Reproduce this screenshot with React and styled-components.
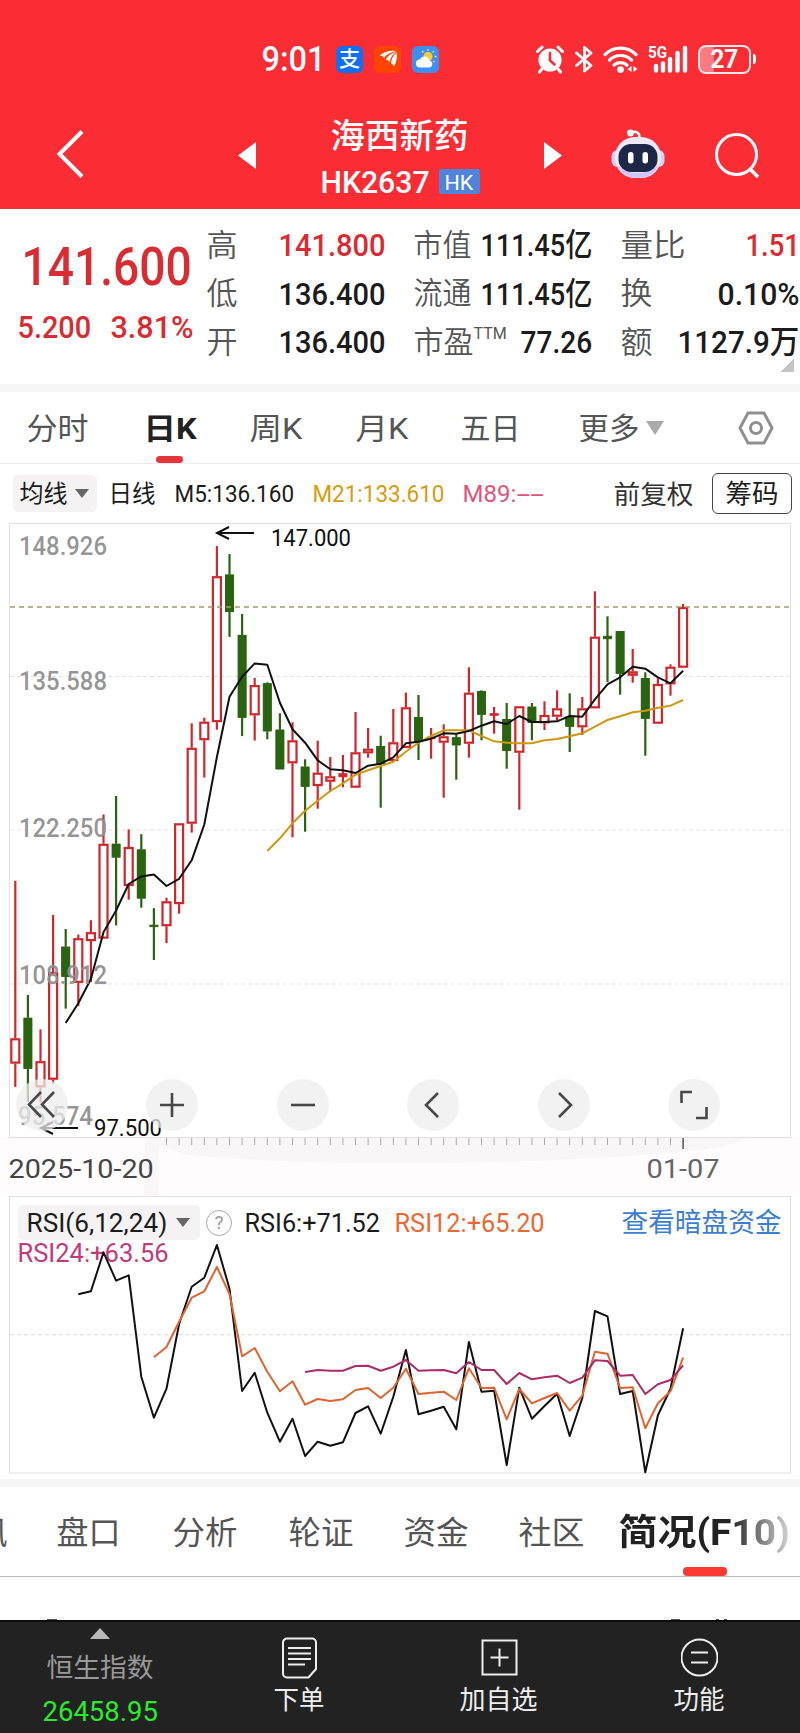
import React, { useLayoutEffect, useRef, useState } from "react";
import styled, { createGlobalStyle } from "styled-components";

const GlobalStyle = createGlobalStyle`
    * { box-sizing: border-box; }
    body {
        margin: 0;
        background: #fff;
        font-family: Roboto, "Noto Sans CJK SC", sans-serif;
        color: #1c1c1c;
    }
    svg { display: block; flex: none; }
`;

const Page = styled.div`
    width: 800px;
    height: 1733px;
    overflow: hidden;
    display: flex;
    flex-direction: column;
`;

/* ---------- text squeezed to a fixed width ---------- */

const FitBox = styled.span`
    display: block;
    flex: none;
    width: ${(p) => p.$w}px;
    margin-left: ${(p) => p.$ml || 0}px;
    font-size: ${(p) => p.$size}px;
    font-weight: ${(p) => p.$weight || 400};
    color: ${(p) => p.$color || "inherit"};
    line-height: 1.2;
    white-space: nowrap;
`;

const FitInner = styled.span`
    display: inline-block;
    transform-origin: left center;
`;

function Fit({ w, ml, size, weight, color, children }) {
    const ref = useRef(null);
    const [scale, setScale] = useState(1);

    useLayoutEffect(() => {
        setScale(w / ref.current.offsetWidth);
    }, [w, children]);

    return (
        <FitBox $w={w} $ml={ml} $size={size} $weight={weight} $color={color}>
            <FitInner ref={ref} style={{ transform: `translate(-0.5px, 1px) scaleX(${scale})` }}>{children}</FitInner>
        </FitBox>
    );
}

/* ---------- header ---------- */

const Header = styled.header`
    height: 209px;
    flex: none;
    background: #fa2c34;
    border-bottom: 1px solid #d9363e;
    color: #fff;
`;

const StatusBar = styled.div`
    height: 104px;
    padding: 14px 0 0 262px;
    display: flex;
    align-items: center;
`;

const AppIcon = styled.div`
    width: 27px;
    height: 27px;
    margin-left: ${(p) => p.$ml}px;
    border-radius: 6px;
    background: ${(p) => p.$bg};
    display: flex;
    align-items: center;
    justify-content: center;
    font-size: 21px;
    line-height: 1;
    font-weight: 500;
`;

const StatusIcons = styled.div`
    display: flex;
    align-items: center;
    margin-left: 97px;
`;

const Battery = styled.div`
    width: 53px;
    height: 29px;
    margin-left: 10px;
    border: 2px solid #ffe6e7;
    border-radius: 8px;
    display: flex;
    align-items: center;
    justify-content: center;
    background: linear-gradient(90deg, #fc7a80 0 28%, transparent 28%);
`;

const BatteryTip = styled.div`
    width: 3px;
    height: 10px;
    margin-left: 2px;
    border-radius: 0 3px 3px 0;
    background: #fff;
`;

const TitleBar = styled.div`
    height: 104px;
    display: flex;
    align-items: flex-start;
`;

const TitleIcon = styled.div`
    margin: ${(p) => p.$mt}px 0 0 ${(p) => p.$ml}px;
`;

const Title = styled.div`
    width: 158px;
    margin: 11px 0 0 66px;
    display: flex;
    flex-direction: column;
`;

const CodeRow = styled.div`
    height: 34px;
    margin-top: 9px;
    display: flex;
    align-items: center;
`;

const MarketTag = styled.span`
    width: 42px;
    height: 25px;
    margin-left: 9px;
    display: flex;
    align-items: center;
    justify-content: center;
    background: #4f84dc;
    border-radius: 2px;
`;

function StatusGlyphs() {
    return (
        <svg width="152" height="30" viewBox="0 0 152 30" fill="none" stroke="#fff" strokeLinecap="round">
            {/* alarm */}
            <circle cx="14" cy="16" r="11.6" fill="#fff" stroke="none" />
            <path d="M14 9v7.500l4.500 4" stroke="#fa2c34" strokeWidth="2.600" />
            <path d="M1.500 7.500 6 3.200M26.500 7.500 22 3.200M5.500 25.500 3.500 28M22.500 25.500l2 2.500" strokeWidth="3" />
            {/* bluetooth */}
            <path d="M40.500 9 55 21.500 48.500 27V3.500L55 9 40.500 21.500" strokeWidth="2.800" strokeLinejoin="round" />
            {/* wifi */}
            <path d="M69 10.500c8.500-8.500 22.500-8.500 31 0M73.500 16c6-6 16-6 22 0M78 21.200c3.500-3.500 9.500-3.500 13 0" strokeWidth="3.200" />
            <circle cx="84.500" cy="25.600" r="3.400" fill="#fff" stroke="none" />
            <path d="M91.500 25l4-3v6zM101.500 25l-4-3v6z" fill="#fff" stroke="none" />
            {/* signal */}
            <text x="112" y="14" fill="#fff" stroke="none" fontSize="16" fontWeight="700" textLength="19" lengthAdjust="spacingAndGlyphs">5G</text>
            <path d="M120 22v4.500M127 19.500v7M134 15v11.500M141.500 9v17.500M149 4v22.500" strokeWidth="4.400" />
        </svg>
    );
}

function Robot() {
    return (
        <svg width="56" height="52" viewBox="0 0 56 52">
            <path d="M21 4.500c5-2 9 0 8.500 6" fill="none" stroke="#fff" strokeWidth="2.500" />
            <circle cx="20.500" cy="5" r="3.400" fill="#fff" />
            <rect x="1.500" y="22" width="12" height="17" rx="6" fill="#d4cffc" />
            <rect x="42.500" y="22" width="12" height="17" rx="6" fill="#d4cffc" />
            <rect x="5" y="9" width="46" height="41" rx="20" fill="#eeeafe" />
            <path d="M7 36c4 10 12 14 21 14s17-4 21-14c-6 7-12 9-21 9s-15-2-21-9z" fill="#cfc4fb" />
            <rect x="8.500" y="16" width="39" height="28" rx="12.500" fill="#1d2748" />
            <rect x="18" y="24" width="5.500" height="11.500" rx="2.700" fill="#fff" />
            <rect x="32.500" y="24" width="5.500" height="11.500" rx="2.700" fill="#fff" />
        </svg>
    );
}

/* ---------- quote ---------- */

const Quote = styled.section`
    height: 175px;
    flex: none;
    padding: 11px 0 0 18px;
    display: flex;
    align-items: flex-start;
    position: relative;
`;

const Price = styled.div`
    width: 189px;
    padding-top: 14px;
    color: #d92b31;
`;

const Change = styled.div`
    display: flex;
    margin-top: 8px;
`;

const Stats = styled.div`
    display: grid;
    grid-template-columns: repeat(3, 178.500px);
    grid-auto-rows: 48.500px;
    column-gap: 28.500px;
`;

const Stat = styled.div`
    display: flex;
    align-items: center;
    justify-content: space-between;
`;

const StatLabel = styled.div`
    display: flex;
    color: #555;
`;

const Corner = styled.div`
    position: absolute;
    left: 781px;
    top: 150px;
    width: 13px;
    height: 13px;
    background: linear-gradient(135deg, transparent 50%, #c4c4c4 50%);
`;

const stats = [
    { label: "高", lw: 31, value: "141.800", w: 107, up: true },
    { label: "市值", lw: 58, value: "111.45亿", w: 112 },
    { label: "量比", lw: 65, value: "1.51", w: 54, up: true },
    { label: "低", lw: 31, value: "136.400", w: 107 },
    { label: "流通", lw: 58, value: "111.45亿", w: 112 },
    { label: "换", lw: 32, value: "0.10%", w: 82 },
    { label: "开", lw: 31, value: "136.400", w: 107 },
    { label: "市盈", lw: 60, value: "77.26", w: 72, note: "TTM" },
    { label: "额", lw: 32, value: "1127.9万", w: 122 },
];

const Gap = styled.div`
    height: 8px;
    flex: none;
    background: #f6f6f6;
    margin-top: ${(p) => p.$mt || 0}px;
`;

/* ---------- period tabs ---------- */

const Tabs = styled.nav`
    height: ${(p) => p.$h}px;
    flex: none;
    display: flex;
    border-bottom: 1px solid ${(p) => p.$line};
    overflow: hidden;
`;

const Tab = styled.div`
    position: relative;
    height: 100%;
    display: flex;
    align-items: center;
    margin-left: ${(p) => p.$ml}px;
    color: ${(p) => (p.$on ? "#222" : "#555")};
`;

const TabMark = styled.div`
    position: absolute;
    bottom: 0;
    left: ${(p) => p.$left}px;
    width: ${(p) => p.$w}px;
    height: ${(p) => p.$h}px;
    border-radius: 4px;
    background: ${(p) => p.$c};
`;

const Caret = styled.i`
    flex: none;
    margin-left: ${(p) => p.$ml || 0}px;
    border: ${(p) => p.$s}px solid transparent;
    border-bottom: 0;
    border-top: ${(p) => p.$h}px solid ${(p) => p.$c};
`;

const periods = [
    { text: "分时", w: 62, ml: 27 },
    { text: "日K", w: 53, ml: 55, on: true },
    { text: "周K", w: 53, ml: 53 },
    { text: "月K", w: 53, ml: 53 },
    { text: "五日", w: 60, ml: 52 },
    { text: "更多", w: 61, ml: 58 },
];

/* ---------- moving average row ---------- */

const MaRow = styled.div`
    height: 59px;
    flex: none;
    padding-left: 13px;
    display: flex;
    align-items: center;
`;

const MaTexts = styled.div`
    display: flex;
    padding-top: 2px;
`;

const Chip = styled.div`
    width: ${(p) => p.$w}px;
    height: ${(p) => p.$h}px;
    flex: none;
    padding-left: ${(p) => p.$pl}px;
    display: flex;
    align-items: center;
    background: #f5f2f3;
    border-radius: 5px;
`;

const ChipsButton = styled.div`
    width: 80px;
    height: 41px;
    margin-left: 18px;
    display: flex;
    align-items: center;
    justify-content: center;
    border: 1.500px solid #444;
    border-radius: 6px;
`;

/* ---------- charts ---------- */

const STEP = 12.6;
const X0 = 15.3;
const cx = (i) => X0 + i * STEP;

// [high, bodyTop, bodyBottom, low, up]
const candles = [
    [357.8, 515.3, 540.6, 563.9, 1], [471.9, 494.8, 545.8, 578.8, 0], [506.4, 538.2, 564.3, 579.6, 1],
    [391.9, 449, 556.7, 560.7, 1], [406, 423.7, 453.8, 485.6, 0], [411.6, 415.2, 459.8, 483.1, 1],
    [397.2, 409.2, 418.1, 459, 1], [291.5, 320.8, 415.6, 415.6, 1], [273, 320.8, 334.5, 402.4, 0],
    [306.4, 324, 363, 376.7, 1], [311.2, 326.5, 375.5, 384.7, 0], [385.1, 402.2, 403.6, 437, 0],
    [374.7, 378.3, 403.2, 420.1, 1], [300.3, 300.3, 381.1, 390.7, 1], [200.3, 224.8, 300.7, 309.6, 1],
    [194.7, 198.7, 217.2, 254.5, 1], [23.1, 53.2, 199.1, 206.7, 1], [31.1, 51.6, 89, 113.9, 0],
    [91, 111.9, 194.7, 213.1, 0], [154.9, 162.1, 192.3, 217.6, 1], [159.3, 160.3, 208.3, 216.3, 0],
    [190.3, 206.7, 246.3, 246.3, 0], [199.3, 217.3, 240.3, 314.3, 1], [236.3, 243.7, 263.7, 308.7, 0],
    [217.7, 249.7, 263, 285.7, 1], [234, 253.3, 258.7, 268.7, 1], [232, 250.7, 253.7, 264.3, 1],
    [189, 229.3, 264.7, 264.7, 1], [205, 225.7, 230.3, 234.7, 1], [212.7, 223, 241, 284.7, 0],
    [186, 219.3, 238, 238, 1], [169.7, 184.3, 225, 225, 1], [172, 194, 218.7, 237, 0],
    [205, 214.3, 215.7, 235.7, 1], [201.3, 213.3, 219.7, 274.7, 1], [211.3, 214.3, 222.3, 256.7, 0],
    [144.3, 169.7, 220.7, 234.7, 1], [167.3, 168, 191.7, 217.3, 0], [184, 190.7, 192.3, 210.7, 1],
    [180, 196, 228, 245.7, 0], [183, 183.3, 229.7, 286.7, 1], [180, 183.7, 199.7, 217.3, 0],
    [178.3, 192, 200.3, 207, 1], [167.3, 185.3, 193.7, 197, 1], [170.3, 193.7, 203.7, 229, 0],
    [174, 185.3, 204.3, 212, 1], [68.3, 113.7, 185.3, 185.3, 1], [93.3, 113.3, 115.7, 159.3, 0],
    [108, 108, 150.7, 171.7, 0], [126, 148.3, 152.7, 159.7, 1], [149.3, 155, 195.7, 232.7, 0],
    [155.3, 161, 200.7, 200.7, 1], [141.3, 143.7, 161.3, 172.7, 1], [81, 84, 144.7, 144.7, 1],
];

const ma5 = [
    500, 480.3, 456, 409.2, 387.5, 361, 353.4, 351.4, 363, 355.8, 337.3, 301.5, 234, 173.8, 153.7, 140.4, 141.7,
    179.7, 206.3, 219.7, 237.3, 246.3, 247.3, 250, 242.7, 240.7, 234.3, 220.3, 218.7, 215.7, 210.3, 210.7, 208,
    202.7, 198.3, 201, 193, 199, 199, 198.3, 193, 193.7, 176.3, 161.3, 154.3, 143.7, 145.7, 154.3, 160.3, 147.7,
];

const ma21 = [
    328, 315.3, 300.3, 287.7, 277.7, 268, 260.3, 251.7, 247.3, 243, 238.7, 228.7, 219.7, 213, 207.3, 207.3, 207.3,
    213, 218.3, 219.7, 220.3, 220.3, 217.3, 216, 213.3, 210.3, 203.7, 197, 193.3, 189.3, 187.7, 184.7, 182.7, 177,
];

const rsi6 = [
    98.3, 95.3, 56.3, 84.7, 79.3, 180.7, 221.7, 192.7, 128, 90.7, 81.7, 49, 92.7, 195, 176.7, 216.7, 245.7, 222.7,
    260, 245.7, 249.7, 246.3, 217, 210.3, 237.7, 200.7, 154, 218.3, 214.7, 210.7, 233.3, 146, 195.7, 194.7, 269,
    191.7, 222.7, 210, 197.7, 240, 202, 115, 120.3, 198, 195, 276.3, 219.3, 192.7, 132.3,
];

const rsi12 = [
    161.3, 151, 125.7, 101.7, 95.3, 71, 98, 160.3, 152, 175.7, 195.3, 185.3, 208.7, 203, 205, 203.3, 194, 192, 202,
    191.7, 172.7, 198, 196.7, 195.7, 204, 172.3, 192, 191.7, 223.3, 193, 207.3, 202, 197, 214.7, 199.7, 155.7,
    157.7, 192, 191.3, 232.3, 207.3, 195.3, 161.7,
];

const rsi24 = [
    176, 174, 174.7, 174.7, 170, 169.7, 174.7, 170.7, 164, 174.7, 174.3, 174, 177.3, 166, 174, 174, 188, 177, 183.3,
    181.3, 179.7, 187, 181.7, 164.3, 165, 179.7, 179, 198, 188.3, 184, 169.3,
];

function Line({ data, from, color }) {
    return (
        <polyline
            points={data.map((y, i) => `${cx(from + i).toFixed(1)},${y}`).join(" ")}
            fill="none"
            stroke={color}
            strokeWidth="2"
            strokeLinejoin="round"
        />
    );
}

function Candle({ i, data }) {
    const [high, top, bottom, low, up] = data;
    const x = cx(i);
    const color = up ? "#d0272d" : "#2b6410";
    const flat = bottom - top < 3.5;
    return (
        <g stroke={color} strokeWidth="2.2">
            <line x1={x} x2={x} y1={high} y2={flat ? low : top} />
            {!flat && <line x1={x} x2={x} y1={bottom} y2={low} />}
            {up && !flat ? (
                <rect x={x - 4} y={top + 1} width="8" height={bottom - top - 2} fill="none" />
            ) : (
                <rect x={x - 4} y={top} width="8" height={Math.max(bottom - top, 1)} fill={color} strokeWidth={flat ? 1 : 0} />
            )}
            {!up && !flat && <rect x={x - 4} y={top + 0.5} width="8" height={bottom - top - 1} fill={color} strokeWidth="1" />}
        </g>
    );
}

const axis = [
    ["148.926", 31.5, 19, 88],
    ["135.588", 166.5, 19, 88],
    ["122.250", 313.500, 19, 88],
    ["108.912", 461, 19, 88],
    ["95.574", 602, 18, 75],
];

const KChart = styled.section`
    position: relative;
    height: 673px;
    flex: none;
    background: linear-gradient(#fff 614px, #fefcfd 614px);
`;

const Tools = styled.div`
    position: absolute;
    left: 16px;
    top: 556px;
    display: flex;
    gap: 78.400px;
`;

const ToolButton = styled.div`
    width: 52px;
    height: 52px;
    border-radius: 50%;
    display: flex;
    align-items: center;
    justify-content: center;
    background: rgba(237, 237, 237, 0.74);
`;

const Dates = styled.div`
    position: absolute;
    left: 9px;
    top: 631px;
    display: flex;
    color: #555;
`;

const toolIcons = [
    "M14 2 2 14.500l12 12.500M27 2 15 14.500l12 12.500",
    "M15 3v24M3 15h24",
    "M3 15h24",
    "M20 3 8 15l12 12",
    "M10 3l12 12-12 12",
    "M13 2H2.500v11M17 28h10.500V17",
];

function PriceChart() {
    return (
        <KChart>
            <svg width="800" height="673" viewBox="0 0 800 673">
                <path d="M145 615h600c-10 9-50 14-150 20-120 7-330 7-410-4l-26-8v50h-15z" fill="#f9f6f7" />
                <rect x="9.500" y="0.500" width="781" height="614" fill="none" stroke="#e3e0e1" />
                {[153.5, 307, 461].map((y) => (
                    <line key={y} x1="10" x2="790" y1={y} y2={y} stroke="#e3e3e3" strokeDasharray="4 3" />
                ))}
                {candles.map((c, i) => <Candle key={i} i={i} data={c} />)}
                <line x1="10" x2="790" y1="84" y2="84" stroke="#a39a70" strokeWidth="1.500" strokeDasharray="5 4" />
                <Line data={ma21} from={20} color="#cf980f" />
                <Line data={ma5} from={4} color="#111" />
                {axis.map(([t, y, x, w]) => (
                    <text key={t} x={x} y={y} fontSize="25" fontWeight="500" fill="#909090" fillOpacity="0.95" textLength={w} lengthAdjust="spacingAndGlyphs">{t}</text>
                ))}
                <g stroke="#111" strokeWidth="2" fill="none">
                    <path d="M254 10h-36M229 4l-12 6 12 6" />
                    <path d="M78 605H42M53 599l-12 6 12 6" />
                </g>
                <text x="271" y="22.500" fontSize="23.500" fill="#111" textLength="80" lengthAdjust="spacingAndGlyphs">147.000</text>
                <text x="94" y="612.500" fontSize="23.500" fill="#111" textLength="68" lengthAdjust="spacingAndGlyphs">97.500</text>
                {Array.from({ length: 41 }, (_, i) => (
                    <line key={i} x1={cx(12 + i)} x2={cx(12 + i)} y1="615" y2="622" stroke="#aaa" />
                ))}
                <line x1={cx(53)} x2={cx(53)} y1="615" y2="626" stroke="#555" strokeWidth="1.500" />
            </svg>
            <Tools>
                {toolIcons.map((d) => (
                    <ToolButton key={d}>
                        <svg width="30" height="30" viewBox="0 0 30 30" fill="none" stroke="#484848" strokeWidth="2.600">
                            <path d={d} />
                        </svg>
                    </ToolButton>
                ))}
            </Tools>
            <Dates>
                <Fit w={145} size={25} color="#444">2025-10-20</Fit>
                <Fit w={73} ml={493} size={25} color="#666">01-07</Fit>
            </Dates>
        </KChart>
    );
}

const RsiPanel = styled.section`
    position: relative;
    height: 278px;
    flex: none;
`;

const RsiHead = styled.div`
    position: absolute;
    left: 18px;
    top: 9px;
    display: flex;
    align-items: center;
    height: 35px;
`;

const RsiSecond = styled.div`
    position: absolute;
    left: 18px;
    top: 41px;
`;

const Help = styled.div`
    width: 26px;
    height: 26px;
    margin-left: 6px;
    border: 1.500px solid #aaa;
    border-radius: 50%;
    display: flex;
    align-items: center;
    justify-content: center;
    font-size: 19px;
    color: #999;
`;

const RsiSvg = styled.svg`
    position: relative;
`;

function RsiChart() {
    return (
        <RsiPanel>
            <RsiHead>
                <Chip $w={182} $h={35} $pl={9}>
                    <Fit w={141} size={26}>RSI(6,12,24)</Fit>
                    <Caret $ml={8} $s={7} $h={9} $c="#666" />
                </Chip>
                <Help>?</Help>
                <Fit w={136} ml={13} size={26}>RSI6:+71.52</Fit>
                <Fit w={150} ml={14} size={26} color="#ec6830">RSI12:+65.20</Fit>
                <Fit w={160} ml={77} size={27} color="#3d7ed2">查看暗盘资金</Fit>
            </RsiHead>
            <RsiSecond>
                <Fit w={151} size={26} color="#c5387a">RSI24:+63.56</Fit>
            </RsiSecond>
            <RsiSvg width="800" height="278" viewBox="0 0 800 278">
                <rect x="9.500" y="0.500" width="781" height="276.500" fill="none" stroke="#e3e0e1" />
                <line x1="10" x2="790" y1="138.700" y2="138.700" stroke="#dcdcdc" strokeDasharray="4 3" />
                <Line data={rsi6} from={5} color="#111" />
                <Line data={rsi12} from={11} color="#df6430" />
                <Line data={rsi24} from={23} color="#ab2c68" />
            </RsiSvg>
        </RsiPanel>
    );
}

/* ---------- lower tabs ---------- */

const sections = [
    { text: "资讯", w: 64, ml: -56 },
    { text: "盘口", w: 64, ml: 49 },
    { text: "分析", w: 65, ml: 52 },
    { text: "轮证", w: 65, ml: 51 },
    { text: "资金", w: 65, ml: 50 },
    { text: "社区", w: 66, ml: 50 },
    { text: "简况(F10)", w: 171, ml: 34, on: true },
];

const Fade = styled.div`
    padding-top: 2px;
    -webkit-mask-image: ${(p) => (p.$on ? "linear-gradient(90deg, #000 65%, transparent 108%)" : "none")};
`;

const Peek = styled.div`
    height: 43px;
    flex: none;
    display: flex;
    align-items: flex-end;
    padding-left: 47px;
`;

const PeekMark = styled.span`
    width: ${(p) => p.$w}px;
    height: 1px;
    margin-left: ${(p) => p.$ml || 0}px;
    background: #555;
`;

/* ---------- bottom bar ---------- */

const BottomBar = styled.footer`
    height: 114px;
    flex: none;
    display: flex;
    background: #222;
    border-top: 2px solid #0d0d0d;
    color: #eee;
`;

const IndexCell = styled.div`
    width: 200px;
    padding-top: 6px;
    display: flex;
    flex-direction: column;
    align-items: center;
    gap: 12.500px;
`;

const UpArrow = styled.i`
    border: 10px solid transparent;
    border-top: 0;
    border-bottom: 11px solid #b8b8b8;
`;

const Action = styled.div`
    width: 200px;
    padding: 15px 2px 0 0;
    display: flex;
    flex-direction: column;
    align-items: center;
    gap: 5px;
`;

const actions = [
    { text: "下单", w: 51, d: "M6 1.500h25a4 4 0 0 1 4 4V32l-7.500 8.500H6a4 4 0 0 1-4-4v-31a4 4 0 0 1 4-4zM7 11h23M7 16.500h23M7 22h23M7 27.500h17" },
    { text: "加自选", w: 78, d: "M1.500 3.500h34v34h-34zM18.500 11.500v18M9.500 20.500h18" },
    { text: "功能", w: 51, d: "M18.500 2.500a17.500 17.500 0 1 1 0 36a17.500 17.500 0 1 1 0-36M10 15.500h17M10 25.500h17" },
];

export default function App() {
    return (
        <Page>
            <GlobalStyle />
            <Header>
                <StatusBar>
                    <Fit w={64} size={35} weight={500}>9:01</Fit>
                    <AppIcon $bg="#0f70f5" $ml={10}>支</AppIcon>
                    <AppIcon $bg="#ff4300" $ml={11}>
                        <svg width="20" height="20" viewBox="0 0 20 20" fill="#fff">
                            <path d="M1 7C5 3 12 1 18 2c-5 1-9 3-12 7-1-2-3-3-5-2zM7.500 11c2-4 6-7 11-8.500-4 3-6 6-7 10.500-1-1.500-2.500-2.500-4-2zM13 14.500c0-4 2-8 5.500-11 1 5 0 9-2.500 14-.5-1.500-1.500-2.500-3-3z" />
                        </svg>
                    </AppIcon>
                    <AppIcon $bg="#3d8ff0" $ml={11}>
                        <svg width="24" height="24" viewBox="0 0 24 24">
                            <circle cx="14" cy="9.500" r="4.500" fill="#ffce2e" />
                            <path d="M14 2v2M8 4l1.500 1.500M20 4l-1.500 1.500M20.500 9.500h2M19 14l1.500 1" stroke="#ffd75a" strokeWidth="1.300" />
                            <path d="M6 20.500a4 4 0 0 1 0-8 5 5 0 0 1 9.500 1 3.600 3.600 0 0 1 0 7z" fill="#fff" />
                        </svg>
                    </AppIcon>
                    <StatusIcons>
                        <StatusGlyphs />
                        <Battery>
                            <Fit w={28} size={25} weight={700}>27</Fit>
                        </Battery>
                        <BatteryTip />
                    </StatusIcons>
                </StatusBar>
                <TitleBar>
                    <TitleIcon $mt={26} $ml={56}>
                        <svg width="28" height="48" viewBox="0 0 28 48" fill="none" stroke="#fff" strokeWidth="4">
                            <path d="M26 1.500 3.500 24 26 46.500" />
                        </svg>
                    </TitleIcon>
                    <TitleIcon $mt={38} $ml={154}>
                        <svg width="18" height="28" viewBox="0 0 18 28"><path d="M18 0v27L0 13.500z" fill="#fff" /></svg>
                    </TitleIcon>
                    <Title>
                        <Fit w={138} ml={9} size={34} weight={500}>海西新药</Fit>
                        <CodeRow>
                            <Fit w={109} ml={-1} size={31} weight={500}>HK2637</Fit>
                            <MarketTag><Fit w={29} size={20}>HK</Fit></MarketTag>
                        </CodeRow>
                    </Title>
                    <TitleIcon $mt={38} $ml={64}>
                        <svg width="18" height="28" viewBox="0 0 18 28"><path d="M0 0v27l18-13.500z" fill="#fff" /></svg>
                    </TitleIcon>
                    <TitleIcon $mt={24} $ml={48}><Robot /></TitleIcon>
                    <TitleIcon $mt={28} $ml={48}>
                        <svg width="46" height="46" viewBox="0 0 46 46" fill="none" stroke="#fff" strokeWidth="3">
                            <circle cx="22.500" cy="22.500" r="20" />
                            <path d="M36 37l8 8" strokeWidth="3.500" />
                        </svg>
                    </TitleIcon>
                </TitleBar>
            </Header>

            <Quote>
                <Price>
                    <Fit w={170} ml={4} size={54} weight={500}>141.600</Fit>
                    <Change>
                        <Fit w={74} size={32} weight={500}>5.200</Fit>
                        <Fit w={83} ml={19} size={32} weight={500}>3.81%</Fit>
                    </Change>
                </Price>
                <Stats>
                    {stats.map((s) => (
                        <Stat key={s.label}>
                            <StatLabel>
                                <Fit w={s.lw} size={31} weight={350}>{s.label}</Fit>
                                {s.note && <Fit w={33} size={16}>{s.note}</Fit>}
                            </StatLabel>
                            <Fit w={s.w} size={32} weight={500} color={s.up ? "#d92b31" : "#1c1c1c"}>{s.value}</Fit>
                        </Stat>
                    ))}
                </Stats>
                <Corner />
            </Quote>

            <Gap />

            <Tabs $h={72} $line="#ececec">
                {periods.map((p) => (
                    <Tab key={p.text} $ml={p.ml} $on={p.on}>
                        <Fit w={p.w} size={30} weight={p.on ? 700 : 400}>{p.text}</Fit>
                        {p.on && <TabMark $left={12} $w={27} $h={7} $c="#e5343a" />}
                    </Tab>
                ))}
                <Tab $ml={6}><Caret $s={9} $h={14} $c="#aaa" /></Tab>
                <Tab $ml={74}>
                    <svg width="36" height="34" viewBox="0 0 36 34" fill="none" stroke="#909090" strokeWidth="3">
                        <path d="M10 2h16l8 15-8 15H10L2 17z" strokeLinejoin="round" />
                        <circle cx="18" cy="17" r="5.500" />
                    </svg>
                </Tab>
            </Tabs>

            <MaRow>
                <Chip $w={84} $h={37} $pl={7}>
                    <Fit w={48} size={24}>均线</Fit>
                    <Caret $ml={7} $s={7} $h={9} $c="#666" />
                </Chip>
                <MaTexts>
                    <Fit w={47} ml={12} size={24}>日线</Fit>
                    <Fit w={120} ml={19} size={24}>M5:136.160</Fit>
                    <Fit w={132} ml={18} size={24} color="#d89c10">M21:133.610</Fit>
                    <Fit w={54} ml={18} size={24} color="#e2557a">M89:</Fit>
                    <Fit w={27} size={24} color="#e2557a">--</Fit>
                    <Fit w={80} ml={70} size={26} color="#333">前复权</Fit>
                </MaTexts>
                <ChipsButton><Fit w={53} size={26}>筹码</Fit></ChipsButton>
            </MaRow>

            <PriceChart />
            <RsiChart />

            <Gap $mt={5} />

            <Tabs $h={90} $line="#bdbdbd">
                {sections.map((s) => (
                    <Tab key={s.text} $ml={s.ml} $on={s.on}>
                        <Fade $on={s.on}>
                            <Fit w={s.w} size={s.on ? 36 : 32} weight={s.on ? 700 : 400}>{s.text}</Fit>
                        </Fade>
                        {s.on && <TabMark $left={64} $w={44} $h={9} $c="#fa3a32" />}
                    </Tab>
                ))}
            </Tabs>

            <Peek>
                <PeekMark $w={10} />
                <PeekMark $w={9} $ml={614} />
                <PeekMark $w={3} $ml={36} />
                <PeekMark $w={3} $ml={5} />
            </Peek>

            <BottomBar>
                <IndexCell>
                    <UpArrow />
                    <Fit w={107} size={26} color="#999">恒生指数</Fit>
                    <Fit w={115} size={27} color="#2bea2b">26458.95</Fit>
                </IndexCell>
                {actions.map((a) => (
                    <Action key={a.text}>
                        <svg width="37" height="42" viewBox="0 0 37 42" fill="none" stroke="#eee" strokeWidth="2">
                            <path d={a.d} />
                        </svg>
                        <Fit w={a.w} size={26}>{a.text}</Fit>
                    </Action>
                ))}
            </BottomBar>
        </Page>
    );
}
